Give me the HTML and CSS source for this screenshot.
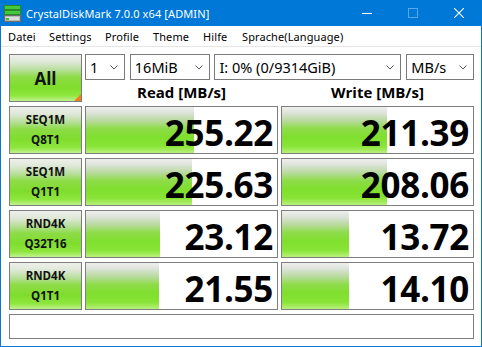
FILE: index.html
```html
<!DOCTYPE html>
<html>
<head>
<meta charset="utf-8">
<link rel="stylesheet" href="styles.css">
</head>
<body>
<div class="window">
  <div class="titlebar">
    <svg class="appicon" width="17" height="17" viewBox="0 0 17 17">
      <rect x="0.5" y="0.5" width="16" height="4" fill="#45c93c" stroke="#2a8a25"/>
      <rect x="0.5" y="5.5" width="16" height="4" fill="#45c93c" stroke="#2a8a25"/>
      <rect x="0.5" y="10.5" width="16" height="6" fill="#b9b9b9" stroke="#6d6d6d"/>
      <rect x="2" y="12" width="13" height="3" fill="#dcdcdc"/>
      <rect x="2" y="13" width="3" height="2" fill="#39c030"/>
    </svg>
    <span class="title">CrystalDiskMark 7.0.0 x64 [ADMIN]</span>
    <div class="caption-buttons">
      <div class="cbtn"><svg width="10" height="10" viewBox="0 0 10 10"><line x1="0" y1="5.5" x2="10" y2="5.5" stroke="#fff" stroke-width="1"/></svg></div>
      <div class="cbtn"><svg width="10" height="10" viewBox="0 0 10 10"><rect x="0.5" y="0.5" width="9" height="9" fill="none" stroke="#5aa6e6" stroke-width="1"/></svg></div>
      <div class="cbtn"><svg width="10" height="10" viewBox="0 0 10 10"><path d="M0 0 L10 10 M10 0 L0 10" stroke="#fff" stroke-width="1.1"/></svg></div>
    </div>
  </div>
  <div class="menubar">
    <span class="mi m1">Datei</span>
    <span class="mi m2">Settings</span>
    <span class="mi m3">Profile</span>
    <span class="mi m4">Theme</span>
    <span class="mi m5">Hilfe</span>
    <span class="mi m6">Sprache(Language)</span>
  </div>
  <div class="client">
    <div class="grid">
      <div class="green allbtn">All<span class="corner"></span></div>
      <div class="topright">
        <div class="combos">
          <div class="combo c-count"><span>1</span><svg class="chev" width="8" height="5" viewBox="0 0 8 5"><polyline points="0.5,0.5 4,4 7.5,0.5" fill="none" stroke="#5a5a5a" stroke-width="1"/></svg></div>
          <div class="combo c-size"><span>16MiB</span><svg class="chev" width="8" height="5" viewBox="0 0 8 5"><polyline points="0.5,0.5 4,4 7.5,0.5" fill="none" stroke="#5a5a5a" stroke-width="1"/></svg></div>
          <div class="combo c-drive"><span>I: 0% (0/9314GiB)</span><svg class="chev" width="8" height="5" viewBox="0 0 8 5"><polyline points="0.5,0.5 4,4 7.5,0.5" fill="none" stroke="#5a5a5a" stroke-width="1"/></svg></div>
          <div class="combo c-unit"><span>MB/s</span><svg class="chev" width="8" height="5" viewBox="0 0 8 5"><polyline points="0.5,0.5 4,4 7.5,0.5" fill="none" stroke="#5a5a5a" stroke-width="1"/></svg></div>
        </div>
        <div class="headers">
          <div class="hdr">Read [MB/s]</div>
          <div class="hdr">Write [MB/s]</div>
        </div>
      </div>

      <div class="green label"><span>SEQ1M</span><span>Q8T1</span></div>
      <div class="result"><div class="bar" style="width:108px"></div><span class="val">255.22</span></div>
      <div class="result"><div class="bar" style="width:105px"></div><span class="val">211.39</span></div>

      <div class="green label"><span>SEQ1M</span><span>Q1T1</span></div>
      <div class="result"><div class="bar" style="width:106px"></div><span class="val">225.63</span></div>
      <div class="result"><div class="bar" style="width:105px"></div><span class="val">208.06</span></div>

      <div class="green label"><span>RND4K</span><span>Q32T16</span></div>
      <div class="result"><div class="bar" style="width:74px"></div><span class="val">23.12</span></div>
      <div class="result"><div class="bar" style="width:67px"></div><span class="val">13.72</span></div>

      <div class="green label"><span>RND4K</span><span>Q1T1</span></div>
      <div class="result"><div class="bar" style="width:73px"></div><span class="val">21.55</span></div>
      <div class="result"><div class="bar" style="width:67px"></div><span class="val">14.10</span></div>

      <div class="status"></div>
    </div>
  </div>
</div>
</body>
</html>
```
FILE: styles.css
```css
html, body {
  margin: 0;
  padding: 0;
  background: #ffffff;
}
body {
  width: 482px;
  height: 347px;
  overflow: hidden;
  font-family: "Open Sans", "Noto Sans", sans-serif;
}
.window {
  box-sizing: border-box;
  width: 482px;
  height: 347px;
  border: 1px solid #0a78d4;
  border-top: none;
  background: #ffffff;
  display: flex;
  flex-direction: column;
}
.titlebar {
  flex: none;
  height: 26px;
  background: #0078d7;
  display: flex;
  align-items: center;
  color: #fff;
  margin: 0 -1px;
  padding-left: 4px;
}
.appicon {
  flex: none;
  margin-top: 1px;
}
.title {
  margin-left: 5px;
  font-family: "Noto Sans", sans-serif;
  font-size: 11px;
  letter-spacing: 0.1px;
}
.caption-buttons {
  margin-left: auto;
  display: flex;
  height: 26px;
}
.cbtn {
  width: 46px;
  display: flex;
  align-items: center;
  justify-content: center;
}
.menubar {
  flex: none;
  height: 20px;
  border-bottom: 1px solid #e6e6e6;
  display: flex;
  align-items: center;
  font-family: "Noto Sans", sans-serif;
  font-size: 11px;
  letter-spacing: 0.1px;
  color: #000;
  padding-left: 7px;
}
.mi { display: block; }
.m1 { width: 41px; }
.m2 { width: 56px; }
.m3 { width: 48px; }
.m4 { width: 50px; }
.m5 { width: 39px; }
.client {
  flex: none;
  padding: 7px 0 0 8px;
}
.grid {
  display: grid;
  grid-template-columns: 73px 193px 193px;
  grid-template-rows: 48px 48px 48px 48px 48px 25px;
  column-gap: 3px;
  row-gap: 4px;
}
.green {
  box-sizing: border-box;
  border: 1px solid #7e7e7e;
  background: linear-gradient(#eef0ec 0%, #dfe8d8 15%, #b9df9c 32%, #8ddc48 48%, #7fdd2c 70%, #8ee63e 88%, #c2f290 100%);
  color: #111;
  font-weight: 700;
  display: flex;
  flex-direction: column;
  align-items: center;
  justify-content: center;
}
.allbtn {
  position: relative;
  font-size: 17px;
  padding-top: 1px;
}
.corner {
  position: absolute;
  right: 0;
  bottom: 0;
  width: 0;
  height: 0;
  border-left: 7px solid transparent;
  border-bottom: 7px solid #f27d1e;
}
.topright {
  grid-column: 2 / 4;
  display: flex;
  flex-direction: column;
}
.combos {
  display: flex;
  gap: 4px;
  height: 26px;
}
.combo {
  box-sizing: border-box;
  height: 26px;
  border: 1px solid #7a7a7a;
  background: #fff;
  display: flex;
  align-items: center;
  padding: 0 6px 0 4px;
  font-family: "Noto Sans", sans-serif;
  font-size: 14.5px;
  color: #000;
}
.combo .chev {
  margin-left: auto;
  flex: none;
}
.c-count { width: 40px; }
.c-size { width: 81px; margin-left: 1px; }
.c-drive { width: 188px; }
.c-unit { width: 68px; margin-left: 1px; }
.headers {
  display: grid;
  grid-template-columns: 193px 193px;
  column-gap: 3px;
  flex: 1;
}
.hdr {
  display: flex;
  align-items: center;
  justify-content: center;
  font-weight: 700;
  font-size: 15px;
  color: #000;
  padding-top: 2px;
}
.label {
  font-size: 11.5px;
  line-height: 20px;
}
.result {
  box-sizing: border-box;
  border: 1px solid #7e7e7e;
  background: #fff;
  position: relative;
  display: flex;
  align-items: center;
  justify-content: flex-end;
  padding-right: 4px;
}
.bar {
  position: absolute;
  left: 0;
  top: 0;
  bottom: 0;
  background: linear-gradient(#efefef 0%, #dfe4db 12%, #b8da9e 30%, #8fdc4c 46%, #80df2e 65%, #88e436 85%, #b9f07c 100%);
}
.val {
  position: relative;
  font-size: 35px;
  font-weight: 700;
  color: #000;
  line-height: 1;
  padding-top: 4px;
  letter-spacing: -0.3px;
}
.status {
  grid-column: 1 / 4;
  box-sizing: border-box;
  height: 25px;
  border: 1px solid #7e7e7e;
  background: #fff;
}
```
